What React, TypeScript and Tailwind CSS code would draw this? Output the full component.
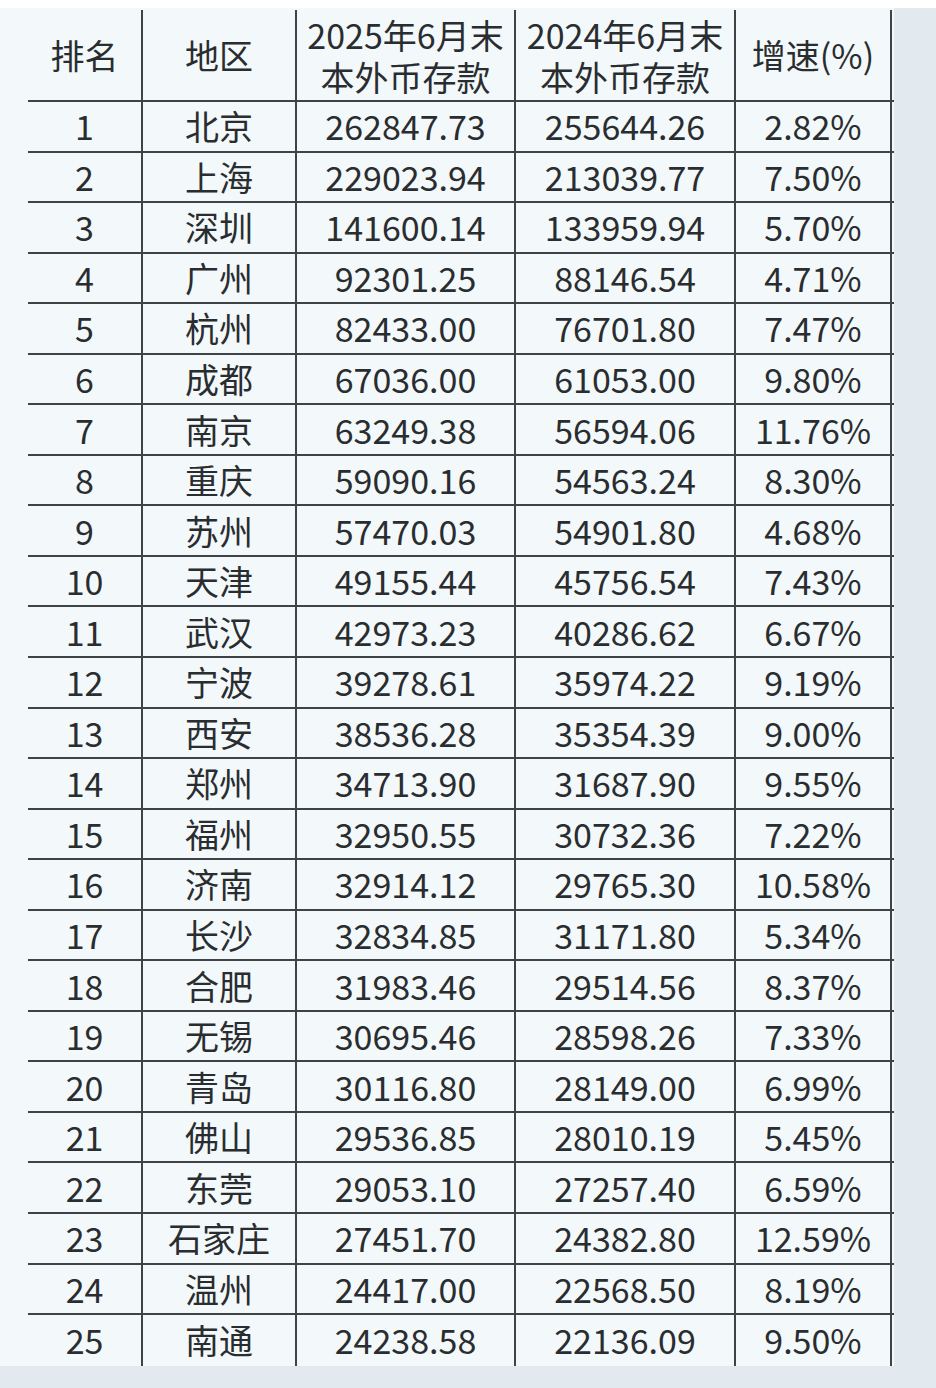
import React from 'react';

const rows: [string, string, string, string][] = [
  ['北京', '262847.73', '255644.26', '2.82%'],
  ['上海', '229023.94', '213039.77', '7.50%'],
  ['深圳', '141600.14', '133959.94', '5.70%'],
  ['广州', '92301.25', '88146.54', '4.71%'],
  ['杭州', '82433.00', '76701.80', '7.47%'],
  ['成都', '67036.00', '61053.00', '9.80%'],
  ['南京', '63249.38', '56594.06', '11.76%'],
  ['重庆', '59090.16', '54563.24', '8.30%'],
  ['苏州', '57470.03', '54901.80', '4.68%'],
  ['天津', '49155.44', '45756.54', '7.43%'],
  ['武汉', '42973.23', '40286.62', '6.67%'],
  ['宁波', '39278.61', '35974.22', '9.19%'],
  ['西安', '38536.28', '35354.39', '9.00%'],
  ['郑州', '34713.90', '31687.90', '9.55%'],
  ['福州', '32950.55', '30732.36', '7.22%'],
  ['济南', '32914.12', '29765.30', '10.58%'],
  ['长沙', '32834.85', '31171.80', '5.34%'],
  ['合肥', '31983.46', '29514.56', '8.37%'],
  ['无锡', '30695.46', '28598.26', '7.33%'],
  ['青岛', '30116.80', '28149.00', '6.99%'],
  ['佛山', '29536.85', '28010.19', '5.45%'],
  ['东莞', '29053.10', '27257.40', '6.59%'],
  ['石家庄', '27451.70', '24382.80', '12.59%'],
  ['温州', '24417.00', '22568.50', '8.19%'],
  ['南通', '24238.58', '22136.09', '9.50%'],
];

const grid = 'grid grid-cols-[115px_154px_219px_220px_156px]';
const cell = 'flex items-center justify-center border-r-2 border-[#3f4346]';

export default function App() {
  return (
    <div
      className="w-[936px] h-[1388px] bg-[#e3eaef] text-[#2a2d30] text-[34px] leading-none"
      style={{ fontFamily: '"Noto Sans CJK SC", "Noto Sans", sans-serif' }}
    >
      <div className="mt-[8px] w-[894px] pl-[28px] pt-[2px] bg-[#f3f8fa]">
        <div className={`${grid} h-[92px] border-b-2 border-[#3f4346]`}>
          <div className={cell}>排名</div>
          <div className={cell}>地区</div>
          <div className={`${cell} flex-col leading-[42px] pt-[2px]`}>
            <span>2025年6月末</span>
            <span>本外币存款</span>
          </div>
          <div className={`${cell} flex-col leading-[42px] pt-[2px]`}>
            <span>2024年6月末</span>
            <span>本外币存款</span>
          </div>
          <div className={cell}>增速(%)</div>
        </div>
        {rows.map((r, i) => (
          <div
            key={r[0]}
            className={`${grid} h-[50.56px] ${i < rows.length - 1 ? 'border-b-2 border-[#3f4346]' : ''}`}
          >
            <div className={cell}>{i + 1}</div>
            <div className={cell}>{r[0]}</div>
            <div className={cell}>{r[1]}</div>
            <div className={cell}>{r[2]}</div>
            <div className={cell}>{r[3]}</div>
          </div>
        ))}
      </div>
    </div>
  );
}
